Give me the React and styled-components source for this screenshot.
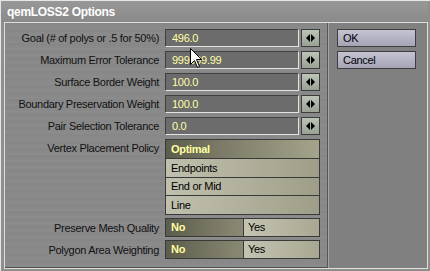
import React from "react";
import styled, { createGlobalStyle } from "styled-components";

const Global = createGlobalStyle`
  html, body { margin: 0; padding: 0; background: #8c8c8c; }
  body { font-family: "Liberation Sans", Arial, sans-serif; letter-spacing: -0.3px; }
  * { box-sizing: border-box; }
`;

const Window = styled.div`
  position: relative;
  width: 430px;
  height: 271px;
  background: #8e8e8e;
  border-top: 1px solid #e6e6e6;
  border-left: 1px solid #e6e6e6;
  padding: 0 2px 2px 3px;
  display: flex;
  flex-direction: column;
  overflow: hidden;
`;

const TitleBar = styled.div`
  height: 21px;
  margin-left: -3px;
  padding-left: 6px;
  display: flex;
  align-items: center;
  background: linear-gradient(180deg, #989898, #8a8a8a);
  color: #ffffff;
  font-weight: bold;
  font-size: 12px;
  letter-spacing: -0.3px;
`;

const Body = styled.div`
  flex: 1;
  display: flex;
  border: 1px solid #dedede;
`;

const MainPanel = styled.div`
  width: 323px;
  padding-top: 6px;
  display: flex;
  flex-direction: column;
  border-right: 1px solid #555555;
  border-bottom: 1px solid #505050;
  background: repeating-linear-gradient(
    180deg,
    #8a8a8a 0px,
    #848484 1px,
    #8c8c8c 2px,
    #878787 3px,
    #8e8e8e 5px,
    #858585 6px,
    #8b8b8b 7px
  );
`;

const SidePanel = styled.div`
  flex: 1;
  border-left: 1px solid #a4a4a4;
  background: #808080;
  padding: 6px 0 0 8px;
  display: flex;
  flex-direction: column;
  gap: 4px;
`;

const Row = styled.div`
  display: flex;
  align-items: ${(p) => (p.$top ? "flex-start" : "center")};
  height: ${(p) => p.$h || 18}px;
  margin-top: ${(p) => (p.$gap === undefined ? 4 : p.$gap)}px;
`;

const Label = styled.div`
  width: 154px;
  margin-right: 6px;
  text-align: right;
  font-size: 11px;
  line-height: 18px;
  color: #111111;
  white-space: nowrap;
`;

const NumberField = styled.div`
  width: 134px;
  height: 18px;
  background: #6c6c6c;
  border-top: 1px solid #404040;
  border-left: 1px solid #404040;
  border-right: 1px solid #e4e4e4;
  border-bottom: 1px solid #e4e4e4;
  color: #ffffa8;
  font-size: 11px;
  line-height: 16px;
  padding-left: 6px;
`;

const ArrowButton = styled.div`
  margin-left: 2px;
  width: 19px;
  height: 18px;
  border: 1px solid #3c3c3c;
  background: linear-gradient(180deg, #bcc4b8, #9aa296);
  display: flex;
  align-items: center;
  justify-content: center;
`;

const ChoiceList = styled.div`
  width: 155px;
  height: 76px;
  border: 1px solid #3a3a3a;
  display: flex;
  flex-direction: column;
`;

const Choice = styled.div`
  flex: 1;
  font-size: 11px;
  display: flex;
  align-items: center;
  padding-left: 5px;
  border-top: ${(p) => (p.$first ? "none" : "1px solid #3a3a3a")};
  color: ${(p) => (p.$active ? "#ffffa0" : "#000000")};
  font-weight: ${(p) => (p.$active ? "bold" : "normal")};
  background: ${(p) =>
    p.$active
      ? "linear-gradient(90deg, #5c5c4c, #7a7a66 35%, #a4a48c)"
      : "linear-gradient(90deg, #c0c0ae, #b0b09c 50%, #9e9e88)"};
`;

const Toggle = styled.div`
  width: 155px;
  height: 19px;
  border: 1px solid #3a3a3a;
  display: flex;
`;

const ToggleOption = styled.div`
  width: 77px;
  flex: ${(p) => (p.$active ? "none" : "1")};
  font-size: 11px;
  line-height: 17px;
  padding-left: ${(p) => (p.$active ? 5 : 4)}px;
  border-left: ${(p) => (p.$active ? "none" : "1px solid #3a3a3a")};
  color: ${(p) => (p.$active ? "#ffffa0" : "#000000")};
  font-weight: ${(p) => (p.$active ? "bold" : "normal")};
  background: ${(p) =>
    p.$active
      ? "linear-gradient(90deg, #5c5c4c, #8a8a74)"
      : "linear-gradient(90deg, #c4c4b2, #a8a892)"};
`;

const DialogButton = styled.div`
  width: 79px;
  height: 18px;
  border: 1px solid #3e3e3e;
  background: linear-gradient(180deg, #c4c4d2, #a4a4b6);
  color: #000000;
  font-size: 11px;
  line-height: 16px;
  padding-left: 5px;
`;

const CursorLayer = styled.svg`
  position: absolute;
  left: 189px;
  top: 47px;
  pointer-events: none;
`;

const ArrowsIcon = () => (
  <svg width="9" height="8" viewBox="0 0 9 8">
    <polygon points="0,4 4,0 4,8" fill="#000" />
    <polygon points="5,0 9,4 5,8" fill="#000" />
  </svg>
);

const Cursor = () => (
  <CursorLayer width="13" height="21" viewBox="0 0 13 21">
    <path
      d="M0.5,0.5 L0.5,16.5 L4.5,12.5 L7.5,19.5 L9.5,18.5 L6.5,11.5 L11.5,11.5 Z"
      fill="#ffffff"
      stroke="#000000"
      strokeWidth="1"
    />
  </CursorLayer>
);

const numberRows = [
  ["Goal (# of polys or .5 for 50%)", "496.0"],
  ["Maximum Error Tolerance", "999999.99"],
  ["Surface Border Weight", "100.0"],
  ["Boundary Preservation Weight", "100.0"],
  ["Pair Selection Tolerance", "0.0"],
];

const policies = ["Optimal", "Endpoints", "End or Mid", "Line"];

const toggles = ["Preserve Mesh Quality", "Polygon Area Weighting"];

export default function App() {
  return (
    <>
      <Global />
      <Window>
        <TitleBar>qemLOSS2 Options</TitleBar>
        <Body>
          <MainPanel>
            {numberRows.map(([label, value], i) => (
              <Row key={label} $gap={i === 0 ? 0 : 4}>
                <Label>{label}</Label>
                <NumberField>{value}</NumberField>
                <ArrowButton>
                  <ArrowsIcon />
                </ArrowButton>
              </Row>
            ))}
            <Row $top $h={76}>
              <Label>Vertex Placement Policy</Label>
              <ChoiceList>
                {policies.map((name, i) => (
                  <Choice key={name} $first={i === 0} $active={i === 0}>
                    {name}
                  </Choice>
                ))}
              </ChoiceList>
            </Row>
            {toggles.map((label) => (
              <Row key={label} $h={19} $gap={3}>
                <Label>{label}</Label>
                <Toggle>
                  <ToggleOption $active>No</ToggleOption>
                  <ToggleOption>Yes</ToggleOption>
                </Toggle>
              </Row>
            ))}
          </MainPanel>
          <SidePanel>
            <DialogButton>OK</DialogButton>
            <DialogButton>Cancel</DialogButton>
          </SidePanel>
        </Body>
        <Cursor />
      </Window>
    </>
  );
}
